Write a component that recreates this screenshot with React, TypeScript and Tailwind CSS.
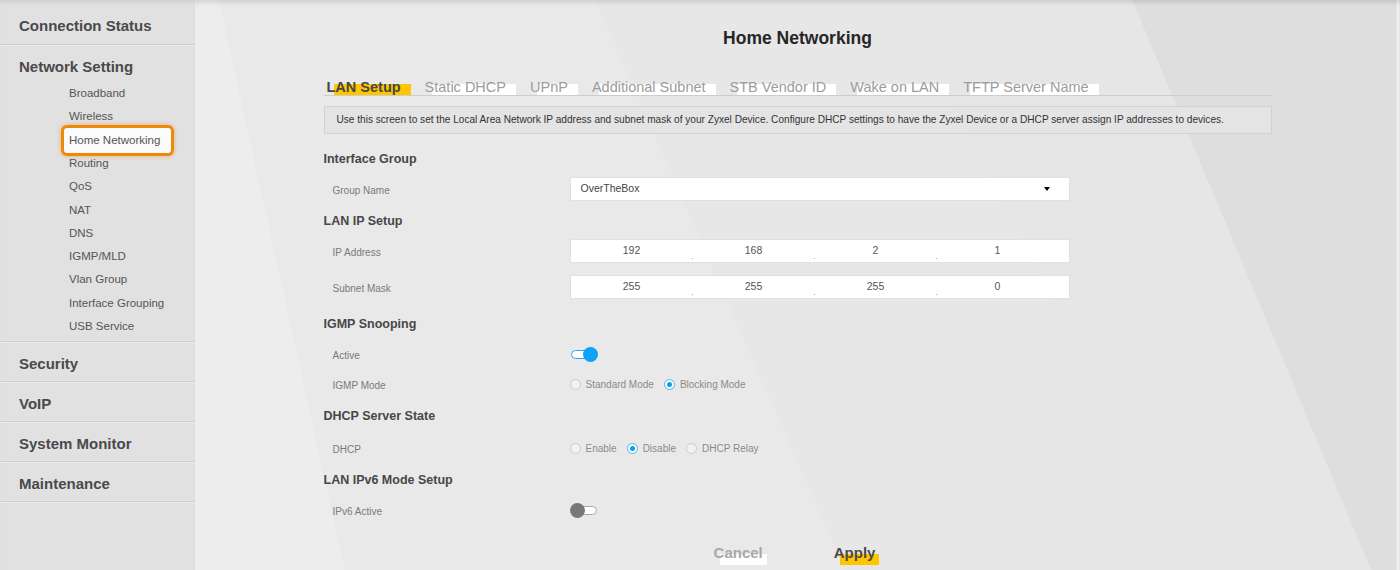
import React from 'react';

const subItems = [
  'Broadband',
  'Wireless',
  'Home Networking',
  'Routing',
  'QoS',
  'NAT',
  'DNS',
  'IGMP/MLD',
  'Vlan Group',
  'Interface Grouping',
  'USB Service',
];

const tabs = ['LAN Setup', 'Static DHCP', 'UPnP', 'Additional Subnet', 'STB Vendor ID', 'Wake on LAN', 'TFTP Server Name'];

function SideHeading({ label, first }: { label: string; first?: boolean }) {
  return (
    <div
      className={`border-b border-[#cfcfcf] shadow-[0_1px_0_#ececec] pl-[19px] ${
        first ? 'h-[45px] pt-[17px]' : 'h-[40px] pt-[13px]'
      }`}
    >
      <span className="block text-[15px] leading-[18px] font-bold text-[#4a4a4a]">{label}</span>
    </div>
  );
}

function Tab({ label, active }: { label: string; active?: boolean }) {
  return (
    <div className="relative h-[16px] leading-[16px]">
      <span className={`absolute left-[7px] -right-[10px] top-[5px] bottom-0 ${active ? 'bg-[#ffc600]' : 'bg-white'}`} />
      <span className={`relative text-[14.5px] ${active ? 'font-bold text-[#474747]' : 'text-[#9c9c9c]'}`}>{label}</span>
    </div>
  );
}

function Heading({ children, className = '' }: { children: React.ReactNode; className?: string }) {
  return <div className={`h-[16px] leading-[16px] text-[12.5px] font-bold text-[#474747] ${className}`}>{children}</div>;
}

function Row({ label, children, className = '' }: { label: string; children: React.ReactNode; className?: string }) {
  return (
    <div className={`flex items-center h-[24px] ${className}`}>
      <div className="w-[246px] pl-[9px] pt-[2px] text-[10px] text-[#7a7a7a]">{label}</div>
      <div className="flex items-center">{children}</div>
    </div>
  );
}

function IpInput({ values }: { values: string[] }) {
  return (
    <div className="flex w-[500px] h-[24px] bg-white border border-[#e0e0e0] pr-[10px]">
      {values.map((v, i) => (
        <div key={i} className="relative flex-1 flex items-center justify-center text-[10.5px] text-[#555]">
          {v}
          {i < 3 && <span className="absolute -right-[1px] bottom-[1px] text-[8px] leading-[8px] text-[#777]">.</span>}
        </div>
      ))}
    </div>
  );
}

function Toggle({ on }: { on?: boolean }) {
  return (
    <div className="relative w-[28px] h-[16px]">
      <span
        className={`absolute left-[1px] top-[3.5px] w-[26px] h-[9px] rounded-full bg-white border ${
          on ? 'border-[#2aa8f4]' : 'border-[#a8a8a8]'
        }`}
      />
      <span
        className={`absolute top-[0.5px] w-[15px] h-[15px] rounded-full ${
          on ? 'right-0 bg-[#0ba3f7]' : 'left-0 bg-[#777]'
        }`}
      />
    </div>
  );
}

function Radio({ label, checked }: { label: string; checked?: boolean }) {
  return (
    <div className="flex items-center mr-[10px]">
      <span
        className={`w-[11px] h-[11px] rounded-full border flex items-center justify-center ${
          checked ? 'border-[#4ab4f3] bg-white' : 'border-[#cacaca] bg-[#f2f2f2]'
        }`}
      >
        {checked && <span className="w-[5px] h-[5px] rounded-full bg-[#0a9ff0]" />}
      </span>
      <span className="ml-[5px] text-[10px] text-[#8a8a8a]">{label}</span>
    </div>
  );
}

function MarkedButton({ label, primary }: { label: string; primary?: boolean }) {
  return (
    <div className="relative h-[18px] leading-[18px]">
      <span className={`absolute left-[6px] -right-[4px] top-[10px] -bottom-[3px] ${primary ? 'bg-[#ffc600]' : 'bg-white'}`} />
      <span className={`relative text-[15px] font-bold ${primary ? 'text-[#4a4a4a]' : 'text-[#a8a8a8]'}`}>{label}</span>
    </div>
  );
}

export default function App() {
  return (
    <div className="flex w-full h-[570px] overflow-hidden font-['Liberation_Sans',Arial,sans-serif]">
      {/* Sidebar */}
      <aside className="w-[195px] shrink-0 bg-[#e1e1e1] shadow-[inset_0_4px_5px_-3px_rgba(0,0,0,0.12)]">
        <SideHeading label="Connection Status" first />
        <div className="border-b border-[#cfcfcf] shadow-[0_1px_0_#ececec]">
          <div className="pl-[19px] pt-[13px] h-[36px]">
            <span className="block text-[15px] leading-[18px] font-bold text-[#4a4a4a]">Network Setting</span>
          </div>
          <ul className="pt-[1px] pb-[3px]">
            {subItems.map((item) => (
              <li key={item} className="h-[23.3px] flex items-center pl-[69px] text-[11.5px] text-[#555]">
                {item === 'Home Networking' ? (
                  <span className="-ml-[5px] pl-[5px] pr-[11px] py-[4px] bg-[#fbfbfb] rounded-[3px] ring-[3px] ring-[#ee890c] shadow-[0_0_4px_3px_rgba(238,137,12,0.55)]">
                    {item}
                  </span>
                ) : (
                  item
                )}
              </li>
            ))}
          </ul>
        </div>
        <SideHeading label="Security" />
        <SideHeading label="VoIP" />
        <SideHeading label="System Monitor" />
        <SideHeading label="Maintenance" />
      </aside>

      {/* Main */}
      <main className="relative flex-1 bg-[#e7e7e7]">
        <svg className="absolute inset-0 w-full h-full" viewBox="0 0 1205 570" preserveAspectRatio="none">
          <polygon points="0,0 24,0 150,570 0,570" fill="#ededed" />
          <polygon points="24,0 400,0 650,570 150,570" fill="#e9e9e9" />
          <polygon points="937,0 1205,0 1205,570 1176,570" fill="#dedede" />
          <polygon points="700,0 937,0 1176,570 1000,570" fill="#e6e6e6" />
          <line x1="1203" y1="0" x2="1203" y2="570" stroke="#eeeeee" strokeWidth="3" />
        </svg>
        <div className="absolute inset-x-0 top-0 h-[6px] bg-gradient-to-b from-black/10 to-transparent" />

        <div className="relative">
          <h1 className="mt-[28px] text-center text-[17.5px] leading-[20px] font-bold text-[#262626]">Home Networking</h1>

          <div className="mx-auto w-[948px]">
            <div className="mt-[31px] flex gap-[24px] pl-[3px] border-b border-[#cdcdcd]">
              {tabs.map((t, i) => (
                <Tab key={t} label={t} active={i === 0} />
              ))}
            </div>

            <div className="mt-[10px] h-[28px] border border-[#d2d2d2] bg-[#e4e4e4] pl-[12px] flex items-center text-[10.1px] text-[#333]">
              Use this screen to set the Local Area Network IP address and subnet mask of your Zyxel Device. Configure DHCP settings to have the Zyxel Device or a DHCP server assign IP addresses to devices.
            </div>

            <Heading className="mt-[17px]">Interface Group</Heading>
            <Row label="Group Name" className="mt-[10px]">
              <div className="flex items-center justify-between w-[500px] h-[24px] bg-white border border-[#e0e0e0] pl-[10px] pr-[19px] text-[10.5px] text-[#444]">
                <span>OverTheBox</span>
                <span className="w-0 h-0 border-l-[3.5px] border-r-[3.5px] border-t-[4px] border-l-transparent border-r-transparent border-t-black" />
              </div>
            </Row>

            <Heading className="mt-[12px]">LAN IP Setup</Heading>
            <Row label="IP Address" className="mt-[10px]">
              <IpInput values={['192', '168', '2', '1']} />
            </Row>
            <Row label="Subnet Mask" className="mt-[12px]">
              <IpInput values={['255', '255', '255', '0']} />
            </Row>

            <Heading className="mt-[17px]">IGMP Snooping</Heading>
            <Row label="Active" className="mt-[10px]">
              <Toggle on />
            </Row>
            <Row label="IGMP Mode" className="mt-[6px]">
              <Radio label="Standard Mode" />
              <Radio label="Blocking Mode" checked />
            </Row>

            <Heading className="mt-[12px]">DHCP Server State</Heading>
            <Row label="DHCP" className="mt-[12px]">
              <Radio label="Enable" />
              <Radio label="Disable" checked />
              <Radio label="DHCP Relay" />
            </Row>

            <Heading className="mt-[12px]">LAN IPv6 Mode Setup</Heading>
            <Row label="IPv6 Active" className="mt-[10px]">
              <Toggle />
            </Row>

            <div className="mt-[22px] flex justify-center gap-[71px] pr-[6px]">
              <MarkedButton label="Cancel" />
              <MarkedButton label="Apply" primary />
            </div>
          </div>
        </div>
      </main>
    </div>
  );
}
